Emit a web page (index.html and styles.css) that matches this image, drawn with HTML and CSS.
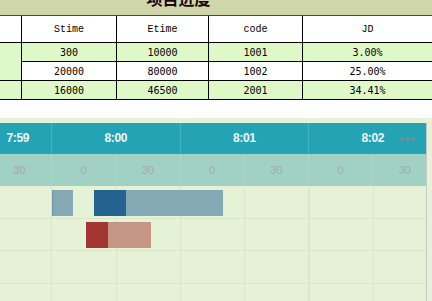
FILE: index.html
```html
<!DOCTYPE html>
<html>
<head>
<meta charset="utf-8">
<link rel="stylesheet" href="styles.css">
</head>
<body>
<div class="table-wrap">
  <table class="progress">
    <colgroup>
      <col class="c1"><col class="c2"><col class="c3"><col class="c4"><col class="c5">
    </colgroup>
    <tr class="title-row"><td colspan="5" class="title"><span class="title-text">项目进度</span></td></tr>
    <tr class="head-row"><td></td><td class="hd">Stime</td><td class="hd">Etime</td><td class="hd">code</td><td class="hd">JD</td></tr>
    <tr class="row green"><td rowspan="2" class="green"></td><td>300</td><td>10000</td><td>1001</td><td>3.00%</td></tr>
    <tr class="row white"><td>20000</td><td>80000</td><td>1002</td><td>25.00%</td></tr>
    <tr class="row green"><td></td><td>16000</td><td>46500</td><td>2001</td><td>34.41%</td></tr>
  </table>
</div>

<div class="chart">
  <div class="gantt">
    <div class="track">
      <div class="hdr">
        <div class="min first"><span>7:59</span></div>
        <div class="min">8:00</div>
        <div class="min">8:01</div>
        <div class="min">8:02</div>
      </div>
      <div class="sub">
        <div class="half first"></div>
        <div class="half">30</div>
        <div class="half">0</div>
        <div class="half">30</div>
        <div class="half">0</div>
        <div class="half">30</div>
        <div class="half">0</div>
        <div class="half">30</div>
      </div>
      <div class="body">
        <div class="grow">
          <div class="bar gb edge" style="left:129.5px;width:21px"></div>
          <div class="bar db" style="left:171.5px;width:32px"></div>
          <div class="bar gb" style="left:203.5px;width:97px"></div>
        </div>
        <div class="grow">
          <div class="bar rd" style="left:163.5px;width:22px"></div>
          <div class="bar sm" style="left:185.5px;width:43px"></div>
        </div>
        <div class="grow"></div>
        <div class="grow"></div>
      </div>
    </div>
    <div class="more"><i></i><i></i><i></i></div>
  </div>
</div>
</body>
</html>
```

FILE: styles.css
```css
html, body {
  margin: 0;
  padding: 0;
  background: #ffffff;
  overflow: hidden;
  width: 432px;
  height: 301px;
}

.table-wrap {
  margin-top: -10px;
  margin-left: -76px;
  width: 508px;
}

.progress {
  border-collapse: collapse;
  table-layout: fixed;
  width: 508px;
  font-family: "DejaVu Sans Mono", "Liberation Mono", monospace;
  font-size: 10px;
  color: #000;
}

.c1 { width: 97px; }
.c2 { width: 95px; }
.c3 { width: 92px; }
.c4 { width: 94px; }
.c5 { width: 130px; }

.progress td {
  border: 1px solid #000;
  padding: 0;
  text-align: center;
  vertical-align: middle;
}

.title-row td {
  height: 24px;
  background: #ced6aa;
  border-color: #4a4a36;
  font-family: "Noto Sans CJK SC", sans-serif;
  font-weight: bold;
  font-size: 16px;
  line-height: 22px;
  color: #1e0606;
}

.title-text {
  display: inline-block;
  margin-top: -5px;
  vertical-align: top;
  line-height: 22px;
}

.head-row td {
  height: 26px;
  background: #ffffff;
}

.hd {
  font-family: "Liberation Mono", monospace;
  font-size: 10px;
}

.row td { height: 18px; }

.row.green td, td.green { background: #dff8c8; }
.row.white td { background: #ffffff; }

.chart {
  margin-top: 18px;
  background: #e6f2d6;
  padding: 5px 5px 0 0;
  height: 180px;
}

.gantt {
  position: relative;
  width: 426px;
  overflow: hidden;
  border-right: 1px solid #c6cace;
  height: 180px;
}

.track {
  margin-left: -77.5px;
  width: 514px;
  font-family: "Liberation Sans", Arial, sans-serif;
}

.hdr {
  display: flex;
  height: 31px;
  background: #24a3b5;
}

.min {
  width: 128.5px;
  flex: none;
  box-sizing: border-box;
  border-left: 1px solid rgba(255, 255, 255, 0.16);
  color: #eef7f7;
  font-weight: bold;
  font-size: 12px;
  letter-spacing: -0.4px;
  line-height: 31px;
  text-align: center;
}

.min.first {
  border-left: none;
  text-align: right;
  padding-right: 22px;
}

.sub {
  display: flex;
  height: 32px;
  background: #a0d1c2;
}

.half {
  width: 64.25px;
  flex: none;
  box-sizing: border-box;
  border-left: 1px solid rgba(255, 255, 255, 0.14);
  color: #a3abab;
  font-size: 11px;
  line-height: 32px;
  text-align: center;
}

.half.first { border-left: none; }

.body {
  background-image: repeating-linear-gradient(to right, #dbe6cc 0, #dbe6cc 1px, transparent 1px, transparent 64.25px);
}

.grow {
  position: relative;
  height: 31.5px;
  border-bottom: 1px solid #dbe6cc;
}

.bar {
  position: absolute;
  top: 4px;
  height: 26px;
}

.gb { background: #84a9b4; }
.gb.edge { box-shadow: inset 1px 0 0 #6a98a9; }
.db { background: #24628f; }
.rd { background: #a33633; }
.sm { background: #c59684; }

.grow:nth-child(2) .bar { top: 3.5px; }

.more {
  position: absolute;
  top: 14px;
  left: 400px;
  display: flex;
  gap: 1.5px;
}

.more i {
  display: block;
  width: 4px;
  height: 4px;
  border-radius: 50%;
  background: #7d8b8f;
}
```
